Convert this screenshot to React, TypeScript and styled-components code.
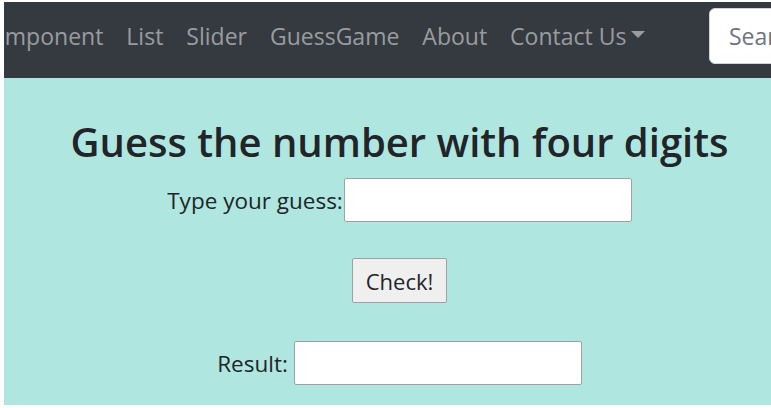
import styled, { createGlobalStyle } from "styled-components";

const GlobalStyle = createGlobalStyle`
  html, body {
    margin: 0;
    padding: 0;
    background: #ffffff;
    overflow: hidden;
  }
  body {
    font-family: "Open Sans", "Noto Sans", sans-serif;
    color: #212529;
  }
`;

export default function App() {
  return (
    <>
      <GlobalStyle />
      <Frame>
        <Page>
          <NavBar>
            <NavList>
              <NavLink>Component</NavLink>
              <NavLink>List</NavLink>
              <NavLink>Slider</NavLink>
              <NavLink>GuessGame</NavLink>
              <NavLink>About</NavLink>
              <NavLink>
                Contact Us
                <Caret />
              </NavLink>
            </NavList>
            <Search placeholder="Search" />
          </NavBar>

          <Game>
            <Title>Guess the number with four digits</Title>
            <Row>
              <Label>Type your guess:</Label>
              <Field type="text" />
            </Row>
            <Button>Check!</Button>
            <Row>
              <Label>Result:</Label>
              <Field type="text" $gap />
            </Row>
          </Game>
        </Page>
      </Frame>
    </>
  );
}

const Frame = styled.div`
  padding: 2px 0 0 4px;
  width: 771px;
  height: 408px;
  box-sizing: border-box;
  overflow: hidden;
`;

const Page = styled.div`
  width: 791px;
`;

const NavBar = styled.nav`
  display: flex;
  align-items: center;
  height: 76px;
  padding-bottom: 8px;
  box-sizing: border-box;
  background-color: #343a40;
  overflow: hidden;
`;

const NavList = styled.ul`
  display: flex;
  align-items: center;
  list-style: none;
  margin: 0 0 0 -39px;
  padding: 0;
`;

const NavLink = styled.li`
  display: flex;
  align-items: center;
  padding: 0 11.5px;
  font-size: 23px;
  color: rgba(255, 255, 255, 0.5);
  white-space: nowrap;
`;

const Caret = styled.span`
  display: inline-block;
  margin-left: 5px;
  margin-top: -3px;
  border-top: 7px solid rgba(255, 255, 255, 0.5);
  border-left: 7px solid transparent;
  border-right: 7px solid transparent;
`;

const Search = styled.input`
  margin-left: 52px;
  flex: 0 0 200px;
  height: 56px;
  box-sizing: border-box;
  padding: 0 19px;
  border: 1px solid #ced4da;
  border-radius: 6px;
  background: #ffffff;
  font-family: inherit;
  font-size: 23px;
  color: #495057;
  outline: none;

  &::placeholder {
    color: #6c757d;
  }
`;

const Game = styled.main`
  display: flex;
  flex-direction: column;
  align-items: center;
  height: 327px;
  background-color: #afe7e0;
  padding-top: 40px;
  box-sizing: border-box;
`;

const Title = styled.h1`
  margin: 0 0 12px;
  font-size: 40px;
  font-weight: 600;
  line-height: 1.2;
`;

const Row = styled.div`
  display: flex;
  align-items: center;
`;

const Label = styled.label`
  font-size: 22.5px;
`;

const Field = styled.input<{ $gap?: boolean }>`
  width: 288px;
  height: 44px;
  box-sizing: border-box;
  margin-left: ${(p) => (p.$gap ? "6px" : "1px")};
  border: 1px solid #a0a0a0;
  border-radius: 2px;
  background: #ffffff;
  font-size: 22px;
`;

const Button = styled.button`
  width: 95px;
  height: 45px;
  margin: 36px 0 38px;
  border: 1px solid #a0a0a0;
  border-radius: 2px;
  background: #efefef;
  font-family: inherit;
  font-size: 22px;
  color: #212529;
  padding: 0;
`;
